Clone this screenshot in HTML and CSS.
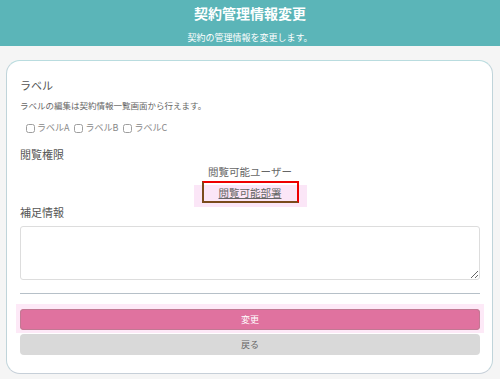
FILE: index.html
```html
<!DOCTYPE html>
<html lang="ja">
<head>
  <meta charset="UTF-8" />
  <title>契約管理情報変更</title>
  <link rel="stylesheet" href="styles.css">
</head>
<body>

  <!-- ヘッダー -->
  <header class="page-header">
    <h1 class="page-title">契約管理情報変更</h1>
    <p class="page-sub">契約の管理情報を変更します。</p>
  </header>

  <!-- フォーム -->
  <div class="form-card">
    <div class="section">
      <h2 class="section-title">ラベル</h2>
      <p class="section-note">ラベルの編集は契約情報一覧画面から行えます。</p>
      <div class="label-list">
        <label class="label-item"><input type="checkbox" class="check"><span>ラベルA</span></label>
        <label class="label-item"><input type="checkbox" class="check"><span>ラベルB</span></label>
        <label class="label-item"><input type="checkbox" class="check"><span>ラベルC</span></label>
      </div>
    </div>

    <div class="section">
      <h2 class="section-title">閲覧権限</h2>
      <div class="perm-links">
        <span class="perm-user">閲覧可能ユーザー</span>
        <div class="perm-dept-wrap">
          <a class="perm-dept" href="#">閲覧可能部署</a>
        </div>
      </div>
    </div>

    <div class="section">
      <h2 class="section-title">補足情報</h2>
      <textarea class="note-field"></textarea>
    </div>

    <hr class="divider">

    <div class="actions">
      <div class="submit-wrap">
        <button class="btn btn-submit">変更</button>
      </div>
      <button class="btn btn-back">戻る</button>
    </div>
  </div>

</body>
</html>
```
FILE: styles.css
```css
body, html {
  margin: 0;
  height: 100%;
  overflow: hidden;
  font-family: "Noto Sans CJK JP", "Noto Sans", sans-serif;
  background-color: #f5f5f5;
  color: #555;
}

.page-header {
  background-color: #5bb5b8;
  color: white;
  text-align: center;
  height: 46px;
  box-sizing: border-box;
  padding-top: 4px;
}

.page-title {
  margin: 0;
  font-size: 14px;
  font-weight: bold;
  line-height: 18px;
}

.page-sub {
  margin: 10px 0 0;
  font-size: 9px;
  line-height: 12px;
}

.form-card {
  margin: 14px 7px 0 6px;
  height: 314px;
  box-sizing: border-box;
  background-color: #fff;
  border: 1px solid #b9dcdf;
  border-bottom-color: #c6cfd8;
  border-left-color: #c0d4da;
  border-right-color: #c0d4da;
  border-radius: 14px;
  padding: 16px 12px 0 13px;
}

.section-title {
  margin: 0;
  font-size: 11px;
  font-weight: normal;
  line-height: 16px;
  color: #555;
}

.section-note {
  margin: 5px 0 0;
  font-size: 8.5px;
  line-height: 14px;
  color: #666;
}

.label-list {
  display: flex;
  gap: 5px;
  margin: 9px 0 0 6px;
  font-size: 9px;
  color: #888;
  line-height: 14px;
}

.label-item {
  display: flex;
  align-items: center;
  gap: 2px;
}

.check {
  margin: 0;
  width: 9px;
  height: 9px;
  opacity: 0.7;
}

.section + .section {
  margin-top: 11px;
}

.perm-links {
  display: flex;
  flex-direction: column;
  align-items: center;
  margin-top: 2px;
  font-size: 10.5px;
  color: #666;
  line-height: 16px;
}

.perm-dept-wrap {
  background: linear-gradient(to bottom, transparent 4px, #fbe6f7 4px);
  padding: 0 8px 4px;
  margin: 1px 0 -14px;
}

.perm-dept {
  display: block;
  box-sizing: border-box;
  height: 22px;
  color: #666;
  border: 2px solid #e00;
  border-left-color: #7a4b1c;
  border-bottom-color: #7a4b1c;
  padding: 2px 15px 0;
  line-height: 16px;
}

.note-field {
  display: block;
  width: 100%;
  height: 54px;
  box-sizing: border-box;
  margin-top: 6px;
  border: 1px solid #ddd;
  border-radius: 3px;
  resize: vertical;
}

.divider {
  border: none;
  border-top: 1px solid #b6c0c8;
  margin: 13px 0 0;
}

.actions {
  display: flex;
  flex-direction: column;
  gap: 1px;
  margin-top: 10px;
}

.submit-wrap {
  background-color: #fde9f7;
  padding: 5px 4px 3px;
  margin: 0 -4px;
}

.btn {
  display: block;
  width: 100%;
  height: 21px;
  border: none;
  border-radius: 4px;
  font-family: inherit;
  font-size: 9px;
}

.btn-submit {
  background-color: #e0729f;
  color: white;
  box-shadow: inset 0 0 0 1px #c27994;
}

.btn-back {
  background-color: #d9d9d9;
  color: #666;
}
```
